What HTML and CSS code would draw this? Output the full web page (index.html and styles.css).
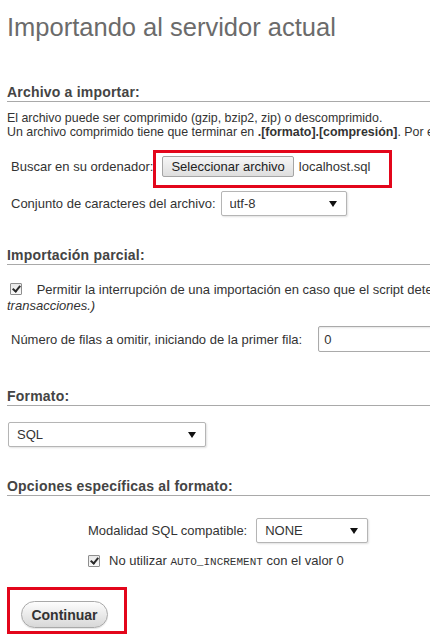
FILE: index.html
```html
<!DOCTYPE html>
<html lang="es">
<head>
  <meta charset="UTF-8" />
  <meta name="viewport" content="width=device-width, initial-scale=1.0" />
  <title>Importar</title>
  <link rel="stylesheet" href="styles.css">
</head>
<body>
  <div class="page">
    <h2 class="title">Importando al servidor actual</h2>

    <form class="import-form">
      <div class="section section-file">
        <h3 class="legend">Archivo a importar:</h3>
        <p class="hint">El archivo puede ser comprimido (gzip, bzip2, zip) o descomprimido.<br>
          Un archivo comprimido tiene que terminar en <b>.[formato].[compresión]</b>. Por ejemplo: <b>.sql.zip</b></p>
        <div class="row row-file">
          <label>Buscar en su ordenador:</label>
          <span class="mark mark-file">
            <button type="button" class="file-btn">Seleccionar archivo</button>
            <span class="file-name">localhost.sql</span>
          </span>
        </div>
        <div class="row row-charset">
          <label for="charset">Conjunto de caracteres del archivo:</label>
          <span class="select-wrap charset">
            <select id="charset"><option>utf-8</option></select>
          </span>
        </div>
      </div>

      <div class="section section-partial">
        <h3 class="legend">Importación parcial:</h3>
        <p class="check-line">
          <input type="checkbox" id="allow_interrupt" checked>
          <label for="allow_interrupt">Permitir la interrupción de una importación en caso que el script detecte que se ha acercado al límite de tiempo. <i>(Esto podría ser un buen método para importar archivos grandes, sin embargo puede romper las</i><br><i>transacciones.)</i></label>
        </p>
        <div class="row row-skip">
          <label for="skip">Número de filas a omitir, iniciando de la primer fila:</label>
          <input type="text" id="skip" class="text-input" value="0">
        </div>
      </div>

      <div class="section section-format">
        <h3 class="legend">Formato:</h3>
        <span class="select-wrap format">
          <select><option>SQL</option></select>
        </span>
      </div>

      <div class="section section-options">
        <h3 class="legend">Opciones específicas al formato:</h3>
        <div class="row row-compat">
          <label for="compat">Modalidad SQL compatible:</label>
          <span class="select-wrap compat">
            <select id="compat"><option>NONE</option></select>
          </span>
        </div>
        <div class="row row-noauto">
          <input type="checkbox" id="no_auto" checked>
          <label for="no_auto">No utilizar <code>AUTO_INCREMENT</code> con el valor 0</label>
        </div>
      </div>

      <div class="actions">
        <span class="mark mark-go">
          <button type="submit" class="go-btn">Continuar</button>
        </span>
      </div>
    </form>
  </div>
</body>
</html>
```

FILE: styles.css
```css
html {
  overflow: hidden;
}
body {
  margin: 0;
  font-family: 'Liberation Sans', Arial, sans-serif;
  font-size: 13px;
  color: #333;
  background: #fff;
}
.page {
  width: 760px;
  padding-left: 7px;
  padding-bottom: 10px;
}
.title {
  margin: 12px 0 0;
  font-size: 25.5px;
  line-height: 30px;
  font-weight: normal;
  color: #6b6b6b;
}
.section {
  margin-top: 42px;
}
.section-partial {
  margin-top: 31px;
}
.section-format {
  margin-top: 36px;
}
.section-options {
  margin-top: 31px;
}
.legend {
  margin: 0;
  padding-bottom: 1px;
  font-size: 14px;
  line-height: 16px;
  font-weight: bold;
  letter-spacing: 0.2px;
  color: #444;
  border-bottom: 1px solid #a9a9a9;
}
.hint {
  margin: 9px 0 0;
  font-size: 12.4px;
  line-height: 14px;
}
.row {
  display: flex;
  align-items: center;
  white-space: nowrap;
}
.row label {
  margin-right: 9px;
}
.row-file {
  margin-top: 17px;
  padding-left: 4px;
}
.row-charset {
  margin-top: 14px;
  padding-left: 4px;
}
.row-charset label {
  margin-right: 5px;
}
.mark {
  position: relative;
  display: inline-flex;
  align-items: center;
}
.mark::after {
  content: "";
  position: absolute;
  border: 3px solid #e3061b;
}
.mark-file::after {
  top: -6px;
  right: -22px;
  bottom: -11px;
  left: -9px;
}
.mark-go::after {
  top: -14px;
  right: -19px;
  bottom: -6px;
  left: -14px;
}
.file-btn {
  height: 21px;
  padding: 0 8px;
  font-family: inherit;
  font-size: 13px;
  color: #222;
  background: linear-gradient(#f6f6f6, #dedede);
  border: 1px solid #a5a5a5;
  border-radius: 2px;
}
.file-name {
  margin-left: 5px;
}
.select-wrap {
  position: relative;
  display: inline-block;
}
.select-wrap::after {
  content: "";
  position: absolute;
  right: 10px;
  top: 10px;
  border-left: 4px solid transparent;
  border-right: 4px solid transparent;
  border-top: 6px solid #111;
  pointer-events: none;
}
.select-wrap select {
  appearance: none;
  -webkit-appearance: none;
  height: 25px;
  padding: 0 8px;
  font-family: inherit;
  font-size: 13px;
  color: #333;
  background: #fff;
  border: 1px solid #b5b5b5;
  border-radius: 2px;
  box-shadow: 1px 1px 2px rgba(0, 0, 0, 0.12);
}
.charset select {
  width: 126px;
}
.format {
  margin-top: 16px;
  margin-left: 1px;
}
.format select {
  width: 198px;
}
.compat select {
  width: 112px;
}
.check-line {
  margin: 17px 0 0;
  line-height: 16px;
  white-space: nowrap;
}
input[type="checkbox"] {
  appearance: none;
  -webkit-appearance: none;
  position: relative;
  width: 12px;
  height: 12px;
  margin: 0 11px 0 3px;
  vertical-align: -1px;
  background: linear-gradient(#e8e8e8, #fafafa);
  border: 1px solid #8e8e8e;
  border-radius: 1px;
}
input[type="checkbox"]:checked::after {
  content: "";
  position: absolute;
  left: 3px;
  top: 0;
  width: 3px;
  height: 6px;
  border: solid #2b2b2b;
  border-width: 0 2px 2px 0;
  transform: rotate(40deg);
}
.row-skip {
  margin-top: 12px;
  padding-left: 4px;
}
.row-skip label {
  margin-right: 16px;
}
.text-input {
  width: 160px;
  height: 26px;
  box-sizing: border-box;
  padding: 0 5px;
  font-family: inherit;
  font-size: 13px;
  color: #333;
  border: 1px solid #aaa;
  border-radius: 2px;
  box-shadow: inset 0 1px 2px rgba(0, 0, 0, 0.1);
}
.row-compat {
  margin-top: 22px;
  padding-left: 81px;
}
.row-noauto {
  margin-top: 10px;
  padding-left: 78px;
}
.row-noauto input[type="checkbox"] {
  margin-right: 9px;
}
code {
  font-family: 'Liberation Mono', monospace;
  font-size: 11px;
}
.actions {
  display: flex;
  margin-top: 33px;
  padding-left: 14px;
}
.go-btn {
  width: 87px;
  height: 27px;
  font-family: inherit;
  font-size: 14px;
  font-weight: bold;
  color: #333;
  background: linear-gradient(#fdfdfd, #d8d8d8);
  border: 1px solid #a9a9a9;
  border-radius: 14px;
  box-shadow: 0 1px 1px rgba(0, 0, 0, 0.1);
}
```
